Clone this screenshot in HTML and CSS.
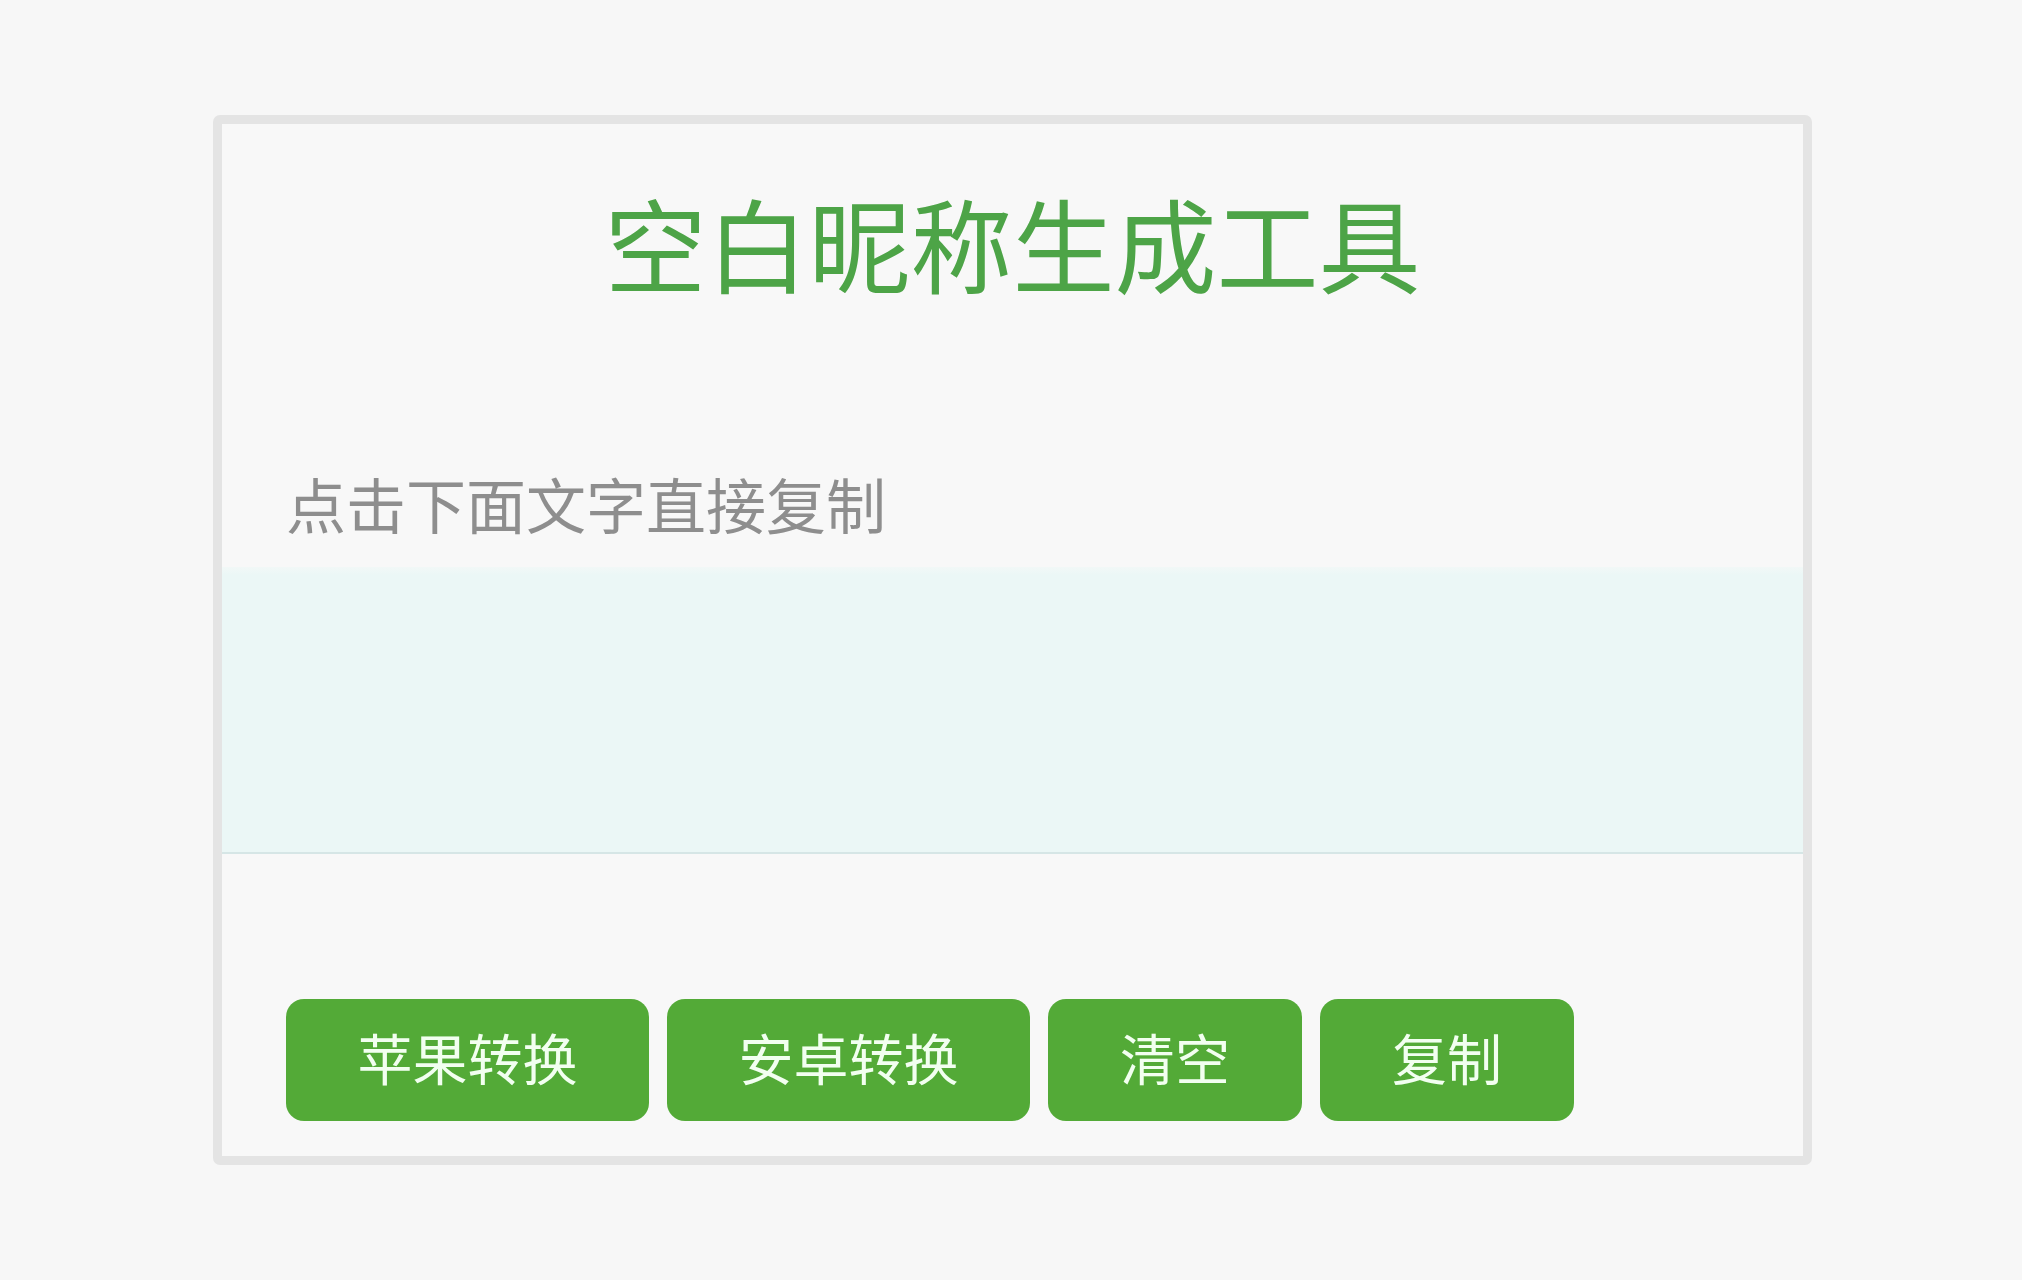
FILE: index.html
```html
<!DOCTYPE html>
<html lang="zh-CN">
<head>
<meta charset="utf-8">
<title>空白昵称生成工具</title>
<link rel="stylesheet" href="styles.css">
</head>
<body>
<div class="card">
  <h1 class="title">空白昵称生成工具</h1>
  <p class="hint">点击下面文字直接复制</p>
  <div class="output"></div>
  <div class="actions">
    <button class="btn btn-wide">苹果转换</button>
    <button class="btn btn-wide">安卓转换</button>
    <button class="btn">清空</button>
    <button class="btn">复制</button>
  </div>
</div>
</body>
</html>
```
FILE: styles.css
```css
html, body {
  margin: 0;
  padding: 0;
  background: #f7f7f7;
  font-family: "Noto Sans CJK SC", "Noto Sans", sans-serif;
}

.card {
  box-sizing: border-box;
  width: 1599px;
  margin: 115px 0 0 213px;
  border: 9px solid #e4e4e4;
  border-radius: 7px;
  background: #f8f8f8;
  padding: 67px 0 35px;
}

.title {
  margin: 0;
  font-size: 102px;
  line-height: 102px;
  font-weight: 400;
  color: #4da447;
  text-align: center;
}

.hint {
  margin: 180px 0 0;
  padding-left: 64px;
  font-size: 60px;
  line-height: 60px;
  color: #8e8e8e;
}

.output {
  margin-top: 34px;
  height: 285px;
  background: linear-gradient(to bottom, #f2f8f7 0, #ebf7f6 8px, #ebf7f6 100%);
  border-bottom: 2px solid #d6e6e6;
}

.actions {
  display: flex;
  gap: 18px;
  margin-top: 145px;
  padding-left: 64px;
}

.btn {
  box-sizing: border-box;
  height: 122px;
  width: 254px;
  padding: 0 0 8px;
  border: none;
  border-radius: 18px;
  background: #53aa37;
  color: #f2fff0;
  font-family: "Noto Sans CJK SC", "Noto Sans", sans-serif;
  font-size: 55px;
  line-height: 114px;
}

.btn-wide {
  width: 363px;
}
```
